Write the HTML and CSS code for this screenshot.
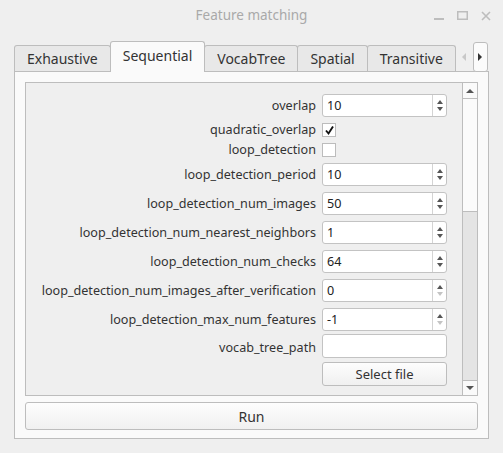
FILE: index.html
```html
<!DOCTYPE html>
<html>
<head>
    <meta charset="utf-8">
    <title>Feature matching</title>
    <link rel="stylesheet" href="styles.css">
</head>
<body>
    <div class="window">
        <div class="titlebar">
            <span class="title">Feature matching</span>
            <div class="controls">
                <svg width="10" height="10" viewBox="0 0 10 10"><rect x="0" y="7" width="10" height="2" fill="#bdbdbd"/></svg>
                <svg width="11" height="10" viewBox="0 0 11 10"><rect x="0.75" y="0.75" width="9.5" height="7.5" fill="none" stroke="#bdbdbd" stroke-width="1.5"/></svg>
                <svg width="10" height="10" viewBox="0 0 10 10"><path d="M1 1 L9 9 M9 1 L1 9" stroke="#bdbdbd" stroke-width="1.6"/></svg>
            </div>
        </div>

        <div class="tabwidget">
            <div class="tabbar">
                <div class="tab">Exhaustive</div>
                <div class="tab active">Sequential</div>
                <div class="tab">VocabTree</div>
                <div class="tab">Spatial</div>
                <div class="tab">Transitive</div>
                <div class="tab-scroll left"><span class="tri-left"></span></div>
                <div class="tab-scroll right"><span class="tri-right"></span></div>
            </div>

            <div class="pane">
                <div class="scrollarea">
                    <div class="form">
                        <label>overlap</label>
                        <div class="spin"><span class="val">10</span><span class="arrows"><i class="up"></i><i class="down"></i></span></div>

                        <label>quadratic_overlap</label>
                        <div class="check"><svg width="11" height="11" viewBox="0 0 11 11"><path d="M2 5.5 L4.5 8.5 L9 1.5" fill="none" stroke="#111" stroke-width="1.9"/></svg></div>

                        <label>loop_detection</label>
                        <div class="check"></div>

                        <label>loop_detection_period</label>
                        <div class="spin"><span class="val">10</span><span class="arrows"><i class="up"></i><i class="down"></i></span></div>

                        <label>loop_detection_num_images</label>
                        <div class="spin"><span class="val">50</span><span class="arrows"><i class="up"></i><i class="down"></i></span></div>

                        <label>loop_detection_num_nearest_neighbors</label>
                        <div class="spin"><span class="val">1</span><span class="arrows"><i class="up"></i><i class="down"></i></span></div>

                        <label>loop_detection_num_checks</label>
                        <div class="spin"><span class="val">64</span><span class="arrows"><i class="up"></i><i class="down"></i></span></div>

                        <label>loop_detection_num_images_after_verification</label>
                        <div class="spin"><span class="val">0</span><span class="arrows"><i class="up"></i><i class="down off"></i></span></div>

                        <label>loop_detection_max_num_features</label>
                        <div class="spin"><span class="val">-1</span><span class="arrows"><i class="up"></i><i class="down off"></i></span></div>

                        <label>vocab_tree_path</label>
                        <div class="lineedit"></div>

                        <span></span>
                        <button class="btn select">Select file</button>
                    </div>
                    <div class="scrollbar">
                        <div class="sb-btn"><span class="tri-up"></span></div>
                        <div class="sb-handle"></div>
                        <div class="sb-track"></div>
                        <div class="sb-btn bottom"><span class="tri-down"></span></div>
                    </div>
                </div>
                <button class="btn run">Run</button>
            </div>
        </div>
    </div>
</body>
</html>
```

FILE: styles.css
```css
body {
    margin: 0;
    background: #efefef;
    font-family: "Noto Sans", "DejaVu Sans", sans-serif;
    font-size: 12.6px;
    color: #333;
}

.window {
    width: 503px;
    height: 453px;
    background: #efefef;
    overflow: hidden;
}

/* title bar */
.titlebar {
    height: 30px;
    display: grid;
    grid-template-columns: 1fr auto 1fr;
    align-items: center;
}
.title {
    grid-column: 2;
    color: #a9a9a9;
    font-size: 13.5px;
}
.controls {
    grid-column: 3;
    justify-self: end;
    display: flex;
    gap: 13px;
    margin-right: 12px;
    margin-top: 1px;
}

/* tabs */
.tabwidget {
    margin: 11px 0 0 14px;
    width: 475px;
}
.tabbar {
    display: flex;
    align-items: flex-end;
    height: 30px;
    position: relative;
    z-index: 1;
}
.tab {
    height: 26px;
    box-sizing: border-box;
    border: 1px solid #bdbdbd;
    border-bottom: none;
    border-radius: 3px 3px 0 0;
    margin-right: -1px;
    background: #e8e8e8;
    display: flex;
    align-items: center;
    justify-content: center;
    padding: 0 12px;
    font-size: 14px;
    color: #333;
}
.tab.active {
    height: 31px;
    margin-bottom: -1px;
    background: #fafafa;
    position: relative;
    z-index: 2;
    padding-bottom: 3px;
}
.tab-scroll {
    height: 30px;
    width: 15px;
    box-sizing: border-box;
    display: flex;
    align-items: center;
    justify-content: center;
    margin-bottom: -1px;
}
.tab-scroll.left {
    margin-left: 2px;
}
.tab-scroll.right {
    border: 1px solid #bdbdbd;
    border-radius: 3px;
    background: #fbfbfb;
    margin-left: 1px;
}
.tri-left {
    border-right: 4px solid #c8c8c8;
    border-top: 4px solid transparent;
    border-bottom: 4px solid transparent;
}
.tri-right {
    border-left: 4px solid #333;
    border-top: 4px solid transparent;
    border-bottom: 4px solid transparent;
}

.pane {
    border: 1px solid #bdbdbd;
    background: #fafafa;
    height: 368px;
    box-sizing: border-box;
    padding: 10px 10px 8px 10px;
    display: flex;
    flex-direction: column;
    gap: 6px;
}

/* scroll area with the parameter form */
.scrollarea {
    height: 314px;
    box-sizing: border-box;
    border: 1px solid #bdbdbd;
    background: #efefef;
    display: flex;
    overflow: hidden;
}
.form {
    flex: 1;
    display: grid;
    grid-template-columns: 1fr 125px;
    column-gap: 6px;
    row-gap: 6px;
    align-content: start;
    align-items: center;
    padding: 11px 15px 0 0;
}
.form label {
    justify-self: end;
    white-space: nowrap;
    line-height: 14px;
}

.spin {
    height: 23px;
    box-sizing: border-box;
    border: 1px solid #c3c3c3;
    border-radius: 3px;
    background: #fff;
    display: flex;
    align-items: center;
}
.spin .val {
    flex: 1;
    padding-left: 4px;
    color: #222;
}
.arrows {
    width: 13px;
    height: 100%;
    border-left: 1px solid #d4d4d4;
    display: flex;
    flex-direction: column;
    align-items: center;
    justify-content: center;
    gap: 3px;
}
.arrows i {
    display: block;
    border-left: 3.5px solid transparent;
    border-right: 3.5px solid transparent;
}
.arrows .up {
    border-bottom: 4px solid #555;
}
.arrows .down {
    border-top: 4px solid #555;
}
.arrows .down.off {
    border-top-color: #c4c4c4;
}

.check {
    width: 14px;
    height: 14px;
    box-sizing: border-box;
    border: 1px solid #bcbcbc;
    background: #fff;
    display: flex;
    align-items: center;
    justify-content: center;
}

.lineedit {
    height: 24px;
    margin-top: -3px;
    box-sizing: border-box;
    border: 1px solid #c3c3c3;
    border-radius: 3px;
    background: #fff;
}

.btn {
    font: inherit;
    color: #333;
    height: 24px;
    border: 1px solid #bdbdbd;
    border-radius: 3px;
    background: linear-gradient(#fdfdfd, #f0f0f0);
    padding: 0;
}
.btn.select {
    margin-top: -2px;
    font-size: 13px;
}
.btn.run {
    height: 28px;
    font-size: 14px;
}

/* vertical scrollbar */
.scrollbar {
    width: 14px;
    border-left: 1px solid #bdbdbd;
    display: flex;
    flex-direction: column;
}
.sb-btn {
    height: 15px;
    border-bottom: 1px solid #bdbdbd;
    background: #fafafa;
    display: flex;
    align-items: center;
    justify-content: center;
}
.sb-btn.bottom {
    border-bottom: none;
    border-top: 1px solid #bdbdbd;
    height: 14px;
}
.sb-handle {
    height: 112px;
    background: #fbfbfb;
    border-bottom: 1px solid #bdbdbd;
}
.sb-track {
    flex: 1;
    background: #e4e4e4;
}
.tri-up {
    border-bottom: 4px solid #555;
    border-left: 4px solid transparent;
    border-right: 4px solid transparent;
}
.tri-down {
    border-top: 4px solid #555;
    border-left: 4px solid transparent;
    border-right: 4px solid transparent;
}
```
